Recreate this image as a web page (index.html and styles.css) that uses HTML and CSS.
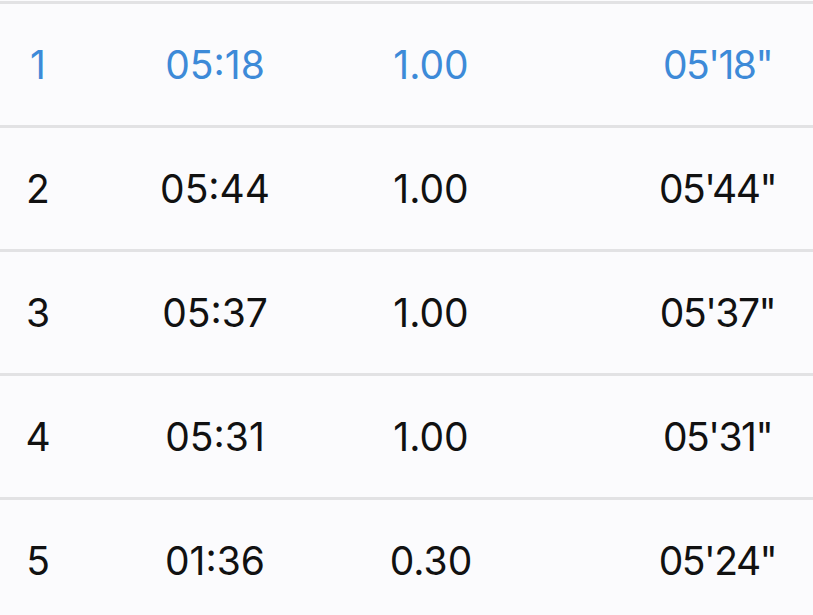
FILE: index.html
```html
<!DOCTYPE html>
<html>
<head>
<meta charset="utf-8">
<link rel="stylesheet" href="styles.css">
</head>
<body>
<div class="table">
  <div class="row active">
    <span class="c1">1</span><span class="c2">05:18</span><span class="c3">1.00</span><span class="c4">05'18"</span>
  </div>
  <div class="row">
    <span class="c1">2</span><span class="c2">05:44</span><span class="c3">1.00</span><span class="c4">05'44"</span>
  </div>
  <div class="row">
    <span class="c1">3</span><span class="c2">05:37</span><span class="c3">1.00</span><span class="c4">05'37"</span>
  </div>
  <div class="row">
    <span class="c1">4</span><span class="c2">05:31</span><span class="c3">1.00</span><span class="c4">05'31"</span>
  </div>
  <div class="row">
    <span class="c1">5</span><span class="c2">01:36</span><span class="c3">0.30</span><span class="c4">05'24"</span>
  </div>
</div>
</body>
</html>
```
FILE: styles.css
```css
html, body {
  margin: 0;
  padding: 0;
  background: #fbfbfd;
  overflow: hidden;
}
.table {
  padding-top: 1px;
  font-family: Inter, "Noto Sans", sans-serif;
  font-size: 39px;
  color: #111;
}
.row {
  display: grid;
  grid-template-columns: 76px 278px 154px 1fr;
  align-items: center;
  height: 121px;
  border-top: 3px solid #e2e2e4;
}
.row > span {
  text-align: center;
  white-space: nowrap;
}
.row .c4 {
  padding-left: 114px;
  letter-spacing: -1.5px;
}
.row.active {
  color: #3d8ad8;
}
```
